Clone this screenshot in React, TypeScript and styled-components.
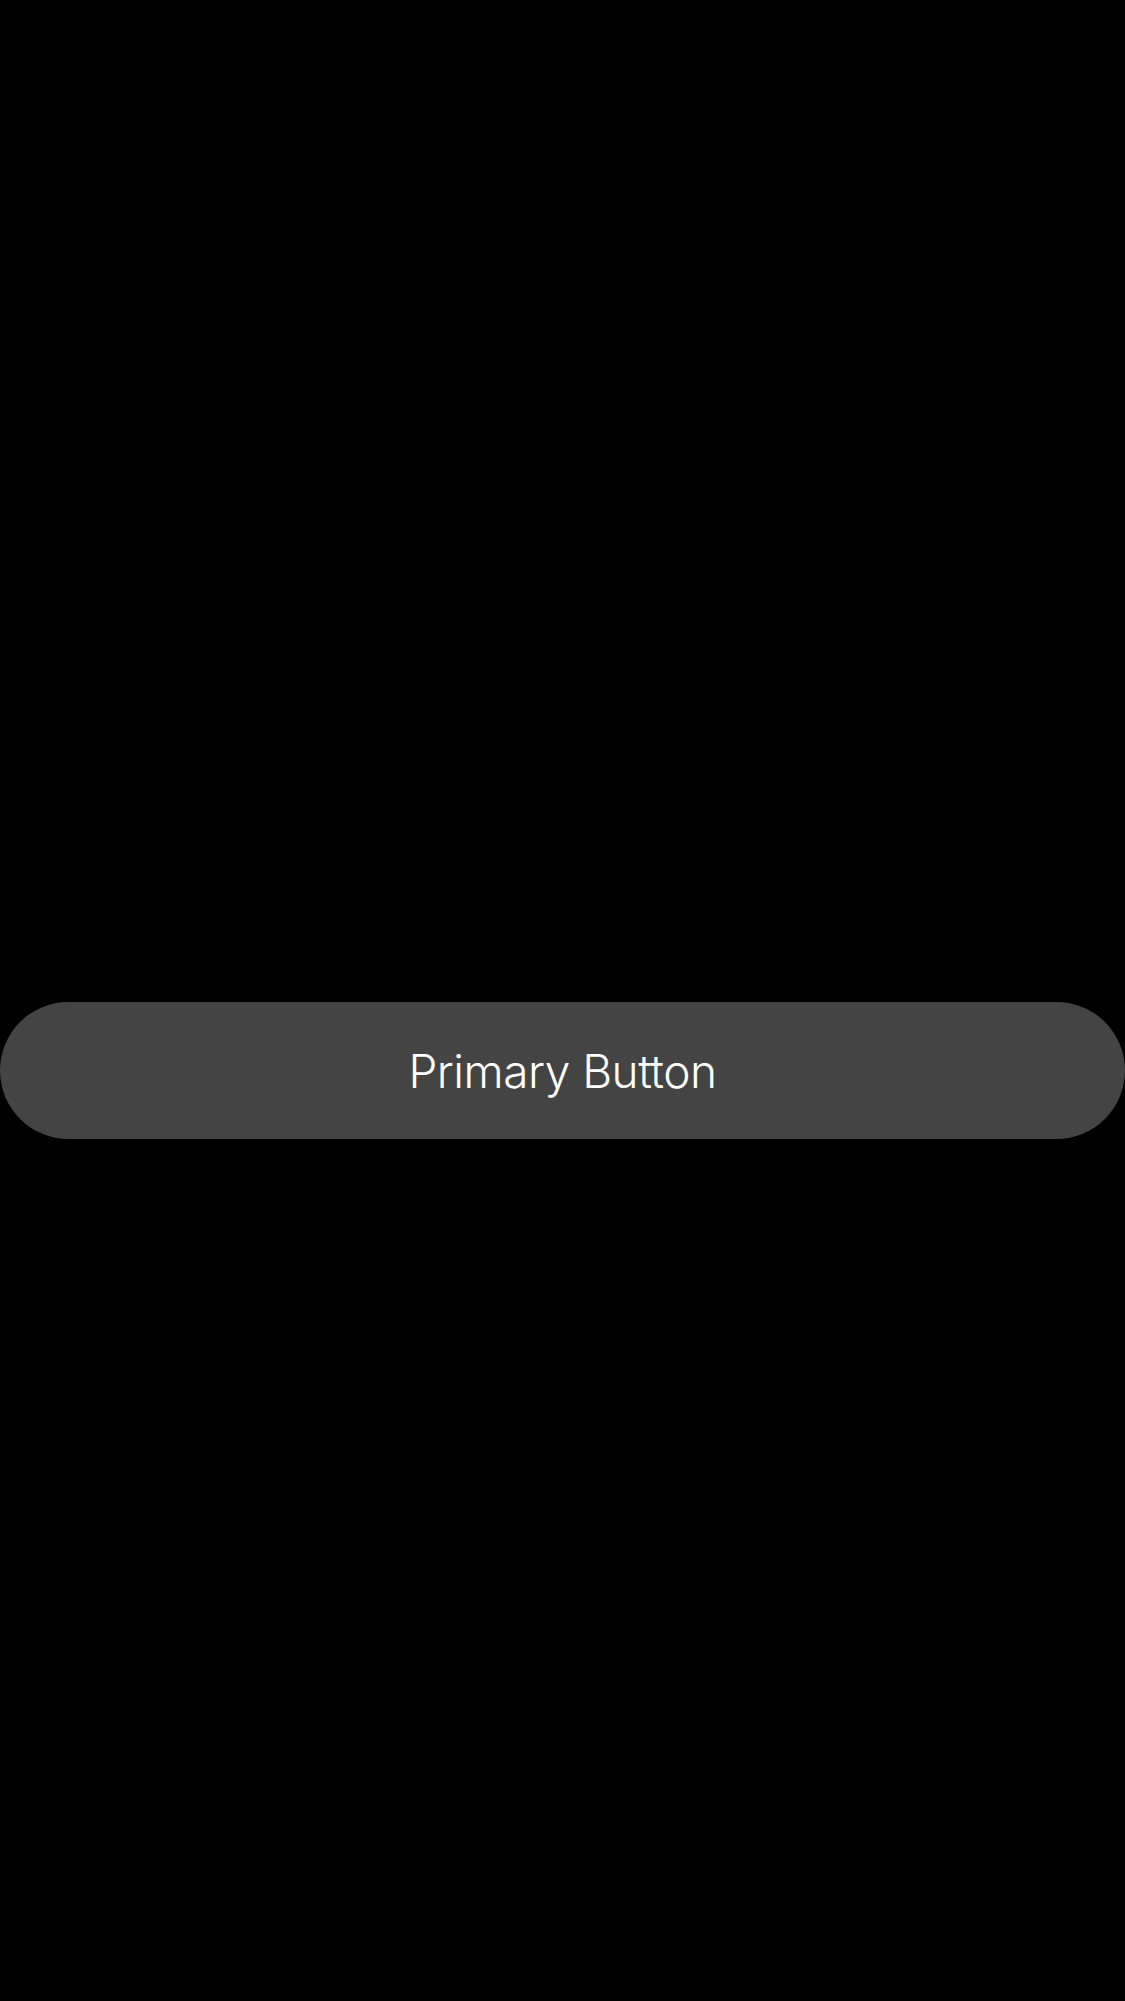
import { createGlobalStyle, styled } from "styled-components";

const GlobalStyle = createGlobalStyle`
  html, body {
    margin: 0;
    padding: 0;
    background: #000;
  }
`;

const App = () => {
  return (
    <>
      <GlobalStyle />
      <Screen>
        <PrimaryButton>Primary Button</PrimaryButton>
      </Screen>
    </>
  );
};

export default App;

const Screen = styled.div`
  width: 1125px;
  height: 2001px;
  background-color: #000;
  padding-top: 1002px;
  box-sizing: border-box;
`;

const PrimaryButton = styled.button`
  display: flex;
  align-items: center;
  justify-content: center;
  width: 100%;
  height: 137px;
  margin: 0;
  padding: 0;
  border: none;
  border-radius: 69px;
  background-color: #444444;
  color: #ffffff;
  font-family: Inter, "Liberation Sans", sans-serif;
  font-weight: 300;
  font-size: 46px;
  letter-spacing: -0.5px;
`;
